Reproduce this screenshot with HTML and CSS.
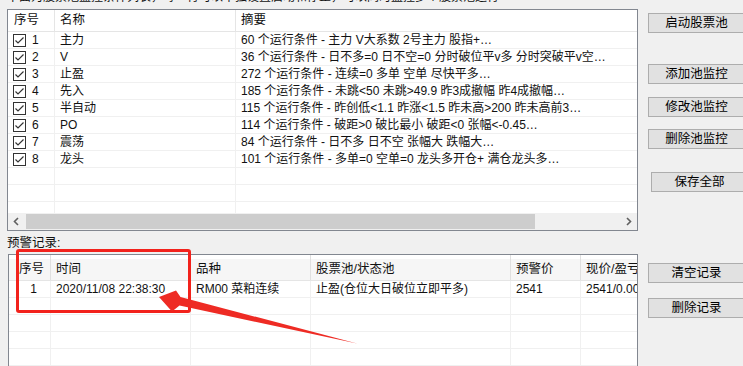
FILE: index.html
```html
<!DOCTYPE html>
<html lang="zh">
<head>
<meta charset="utf-8">
<link rel="stylesheet" href="styles.css">
</head>
<body>
<div class="window">
  <div class="left">
    <div class="caption"><span class="caption-text">下面为股票池监控条件列表，每一行可以单独设置启动和停止，可以同时监控多个股票池运行</span></div>
    <div class="list top-list">
      <div class="row head">
        <div class="cell c1 hpad">序号</div>
        <div class="cell c2 hpad">名称</div>
        <div class="cell c3 hpad">摘要</div>
      </div>
      <div class="body">
        <div class="row"><div class="cell c1"><span class="chk"><svg width="13" height="13" viewBox="0 0 13 13"><rect x="0.5" y="0.5" width="12" height="12" fill="#fff" stroke="#333"/><polyline points="2.5,6.5 5,9 10.5,3.5" fill="none" stroke="#333" stroke-width="1.2"/></svg></span>1</div><div class="cell c2">主力</div><div class="cell c3">60 个运行条件 - 主力 V大系数 2号主力 股指+…</div></div>
        <div class="row"><div class="cell c1"><span class="chk"><svg width="13" height="13" viewBox="0 0 13 13"><rect x="0.5" y="0.5" width="12" height="12" fill="#fff" stroke="#333"/><polyline points="2.5,6.5 5,9 10.5,3.5" fill="none" stroke="#333" stroke-width="1.2"/></svg></span>2</div><div class="cell c2">V</div><div class="cell c3">36 个运行条件 - 日不多=0 日不空=0 分时破位平v多 分时突破平v空…</div></div>
        <div class="row"><div class="cell c1"><span class="chk"><svg width="13" height="13" viewBox="0 0 13 13"><rect x="0.5" y="0.5" width="12" height="12" fill="#fff" stroke="#333"/><polyline points="2.5,6.5 5,9 10.5,3.5" fill="none" stroke="#333" stroke-width="1.2"/></svg></span>3</div><div class="cell c2">止盈</div><div class="cell c3">272 个运行条件 - 连续=0 多单 空单 尽快平多…</div></div>
        <div class="row"><div class="cell c1"><span class="chk"><svg width="13" height="13" viewBox="0 0 13 13"><rect x="0.5" y="0.5" width="12" height="12" fill="#fff" stroke="#333"/><polyline points="2.5,6.5 5,9 10.5,3.5" fill="none" stroke="#333" stroke-width="1.2"/></svg></span>4</div><div class="cell c2">先入</div><div class="cell c3">185 个运行条件 - 未跳&lt;50 未跳&gt;49.9 昨3成撤幅 昨4成撤幅…</div></div>
        <div class="row"><div class="cell c1"><span class="chk"><svg width="13" height="13" viewBox="0 0 13 13"><rect x="0.5" y="0.5" width="12" height="12" fill="#fff" stroke="#333"/><polyline points="2.5,6.5 5,9 10.5,3.5" fill="none" stroke="#333" stroke-width="1.2"/></svg></span>5</div><div class="cell c2">半自动</div><div class="cell c3">115 个运行条件 - 昨创低&lt;1.1 昨涨&lt;1.5 昨未高&gt;200 昨未高前3…</div></div>
        <div class="row"><div class="cell c1"><span class="chk"><svg width="13" height="13" viewBox="0 0 13 13"><rect x="0.5" y="0.5" width="12" height="12" fill="#fff" stroke="#333"/><polyline points="2.5,6.5 5,9 10.5,3.5" fill="none" stroke="#333" stroke-width="1.2"/></svg></span>6</div><div class="cell c2">PO</div><div class="cell c3">114 个运行条件 - 破距&gt;0 破比最小 破距&lt;0 张幅&lt;-0.45…</div></div>
        <div class="row"><div class="cell c1"><span class="chk"><svg width="13" height="13" viewBox="0 0 13 13"><rect x="0.5" y="0.5" width="12" height="12" fill="#fff" stroke="#333"/><polyline points="2.5,6.5 5,9 10.5,3.5" fill="none" stroke="#333" stroke-width="1.2"/></svg></span>7</div><div class="cell c2">震荡</div><div class="cell c3">84 个运行条件 - 日不多 日不空 张幅大 跌幅大…</div></div>
        <div class="row"><div class="cell c1"><span class="chk"><svg width="13" height="13" viewBox="0 0 13 13"><rect x="0.5" y="0.5" width="12" height="12" fill="#fff" stroke="#333"/><polyline points="2.5,6.5 5,9 10.5,3.5" fill="none" stroke="#333" stroke-width="1.2"/></svg></span>8</div><div class="cell c2">龙头</div><div class="cell c3">101 个运行条件 - 多单=0 空单=0 龙头多开仓+ 满仓龙头多…</div></div>
        <div class="row"><div class="cell c1"></div><div class="cell c2"></div><div class="cell c3"></div></div>
        <div class="row"><div class="cell c1"></div><div class="cell c2"></div><div class="cell c3"></div></div>
        <div class="row"><div class="cell c1"></div><div class="cell c2"></div><div class="cell c3"></div></div>
      </div>
      <div class="hscroll">
        <div class="arrow-btn"><svg width="17" height="17" viewBox="0 0 17 17"><polyline points="10,5 6.5,8.5 10,12" fill="none" stroke="#606060" stroke-width="1.6"/></svg></div>
        <div class="track"><div class="thumb"></div></div>
        <div class="arrow-btn"><svg width="17" height="17" viewBox="0 0 17 17"><polyline points="7,5 10.5,8.5 7,12" fill="none" stroke="#606060" stroke-width="1.6"/></svg></div>
      </div>
    </div>
    <div class="label">预警记录:</div>
    <div class="list bottom-list">
      <div class="row head2">
        <div class="cell d1 clipl"><span class="shift">序号</span></div>
        <div class="cell d2 hpad">时间</div>
        <div class="cell d3 hpad">品种</div>
        <div class="cell d4 hpad">股票池/状态池</div>
        <div class="cell d5 hpad">预警价</div>
        <div class="cell d6 hpad">现价/盈亏</div>
      </div>
      <div class="row"><div class="cell d1 num">1</div><div class="cell d2">2020/11/08 22:38:30</div><div class="cell d3">RM00 菜粕连续</div><div class="cell d4">止盈(仓位大日破位立即平多)</div><div class="cell d5">2541</div><div class="cell d6">2541/0.00%</div></div>
      <div class="row"><div class="cell d1"></div><div class="cell d2"></div><div class="cell d3"></div><div class="cell d4"></div><div class="cell d5"></div><div class="cell d6"></div></div>
      <div class="row"><div class="cell d1"></div><div class="cell d2"></div><div class="cell d3"></div><div class="cell d4"></div><div class="cell d5"></div><div class="cell d6"></div></div>
      <div class="row"><div class="cell d1"></div><div class="cell d2"></div><div class="cell d3"></div><div class="cell d4"></div><div class="cell d5"></div><div class="cell d6"></div></div>
      <div class="row"><div class="cell d1"></div><div class="cell d2"></div><div class="cell d3"></div><div class="cell d4"></div><div class="cell d5"></div><div class="cell d6"></div></div>
    </div>
  </div>
  <div class="right">
    <div class="btn b1">启动股票池</div>
    <div class="btn b2">添加池监控</div>
    <div class="btn b3">修改池监控</div>
    <div class="btn b4">删除池监控</div>
    <div class="btn b5">保存全部</div>
    <div class="btn b6">清空记录</div>
    <div class="btn b7">删除记录</div>
  </div>
  <div class="mark-box"></div>
  <svg class="mark-arrow" width="743" height="366" viewBox="0 0 743 366"><polygon points="159,297 176,290.5 180.5,297 357,343.5 179.5,305.5 172,311.5" fill="#ee2b24"/></svg>
</div>
</body>
</html>
```

FILE: styles.css
```css
html, body {
  margin: 0;
  padding: 0;
}
body {
  background: #f0f0f0;
  width: 743px;
  height: 366px;
  overflow: hidden;
  font-family: "Liberation Sans", "Noto Sans CJK SC", sans-serif;
  font-size: 12px;
  color: #111;
}
.window {
  position: relative;
  display: flex;
  width: 743px;
  height: 366px;
}
.left {
  width: 633px;
  padding-left: 7px;
  display: flex;
  flex-direction: column;
}
.caption {
  height: 9px;
  overflow: hidden;
  white-space: nowrap;
}
.caption-text {
  display: block;
  margin-top: -10px;
  line-height: 14px;
}
.list {
  background: #fff;
  border: 1px solid #828790;
  overflow: hidden;
  box-sizing: border-box;
}
.top-list {
  height: 222px;
  display: flex;
  flex-direction: column;
}
.row {
  display: flex;
  height: 17px;
  box-sizing: border-box;
  border-bottom: 1px solid #f0f0f0;
  flex: none;
  white-space: nowrap;
}
.cell {
  box-sizing: border-box;
  border-right: 1px solid #f0f0f0;
  padding-left: 5px;
  line-height: 16px;
  overflow: hidden;
  flex: none;
  display: flex;
  align-items: center;
}
.head {
  height: 22px;
  border-bottom: 1px solid #e5e5e5;
}
.head .cell {
  border-right: 1px solid #e5e5e5;
  line-height: 21px;
  font-size: 12.5px;
}
.hpad {
  padding-left: 5px;
}
.c1 { width: 47px; padding-left: 5px; }
.head .c1 { padding-left: 6px; }
.c2 { width: 181px; }
.c3 { flex: 1; border-right: none; }
.head .c3 { border-right: none; }
.chk {
  display: inline-flex;
  width: 13px;
  height: 13px;
  margin-right: 6px;
}
.body {
  flex: 1;
  overflow: hidden;
}
.hscroll {
  height: 17px;
  display: flex;
  background: #f0f0f0;
  flex: none;
}
.arrow-btn {
  width: 17px;
  height: 17px;
  flex: none;
  display: flex;
}
.track {
  flex: 1;
  padding: 1px 0 0 1px;
  box-sizing: border-box;
}
.thumb {
  width: 509px;
  height: 15px;
  background: #cdcdcd;
}
.label {
  height: 23px;
  line-height: 14px;
  padding-top: 5px;
  box-sizing: border-box;
  font-size: 12.5px;
}
.bottom-list {
  margin-left: 1px;
  width: 630px;
  flex: 1;
  border-bottom: none;
}
.head2 {
  height: 26px;
  border-bottom: 1px solid #e5e5e5;
  background: linear-gradient(#fff 0, #fff 4px, #f6f6f6 4px);
}
.head2 .cell {
  border-right: 1px solid #e0e0e0;
  line-height: 21px;
  padding-top: 4px;
  font-size: 12.5px;
}
.d1 { width: 42px; }
.d2 { width: 140px; }
.d3 { width: 120px; }
.d4 { width: 200px; }
.d5 { width: 70px; }
.d6 { width: 60px; border-right: none; }
.head2 .d6 { border-right: none; }
.clipl {
  padding-left: 9px;
}
.shift {
  display: block;
  width: 26px;
  overflow: hidden;
  direction: rtl;
  white-space: nowrap;
}
.num {
  justify-content: flex-end;
  padding-right: 13px;
}
.right {
  display: flex;
  flex-direction: column;
  padding-left: 10px;
  padding-top: 13px;
}
.btn {
  width: 97px;
  height: 20px;
  box-sizing: border-box;
  background: #e1e1e1;
  border: 1px solid #adadad;
  text-align: center;
  line-height: 18px;
  font-size: 12.5px;
  color: #000;
  flex: none;
}
.b2 { margin-top: 31px; }
.b3 { margin-top: 13px; }
.b4 { margin-top: 12px; }
.b5 { margin-top: 23px; margin-left: 3px; }
.b6 { margin-top: 71px; }
.b7 { margin-top: 15px; }
.mark-box {
  position: absolute;
  left: 16px;
  top: 249px;
  width: 175px;
  height: 64px;
  box-sizing: border-box;
  border: 3px solid #f2221c;
  border-radius: 3px;
}
.mark-arrow {
  position: absolute;
  left: 0;
  top: 0;
  pointer-events: none;
}
```
